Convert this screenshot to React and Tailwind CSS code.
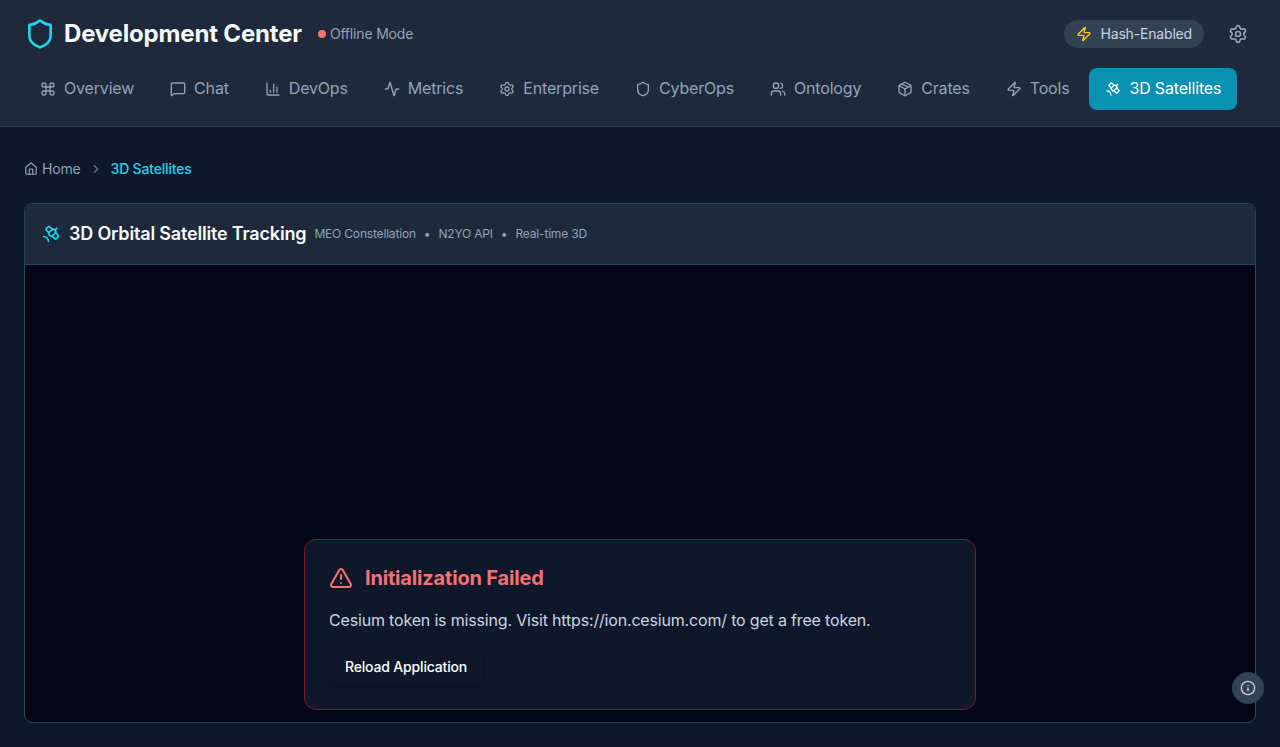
import React from "react";
import { Shield, Zap, Settings, Command, MessageSquare, BarChart3, Activity, Users, Package, Satellite, Home, ChevronRight, AlertTriangle, Info } from "lucide-react";

const tabs = [
  ["Overview", Command],
  ["Chat", MessageSquare],
  ["DevOps", BarChart3],
  ["Metrics", Activity],
  ["Enterprise", Settings],
  ["CyberOps", Shield],
  ["Ontology", Users],
  ["Crates", Package],
  ["Tools", Zap],
  ["3D Satellites", Satellite],
];

function Header() {
  return (
    <header className="h-[127px] border-b border-[#334155] bg-[#1e293b] px-6">
      <div className="flex h-[68px] items-center justify-between">
        <div className="flex items-center">
          <Shield className="mr-2 size-8 text-[#22d3ee]" />
          <h1 className="text-2xl font-bold text-[#f8fafc]">Development Center</h1>
          <span className="ml-4 size-2 rounded-full bg-[#f87171]" />
          <span className="ml-1 text-sm text-[#94a3b8]">Offline Mode</span>
        </div>
        <div className="flex items-center gap-4">
          <div className="flex h-7 items-center gap-2 rounded-full bg-[#334155] px-3 text-sm text-[#cbd5e1]">
            <Zap className="size-4 text-[#facc15]" />
            Hash-Enabled
          </div>
          <button className="p-2 text-[#94a3b8]"><Settings className="size-5" /></button>
        </div>
      </div>
      <nav className="flex gap-1">
        {tabs.map(([label, Icon], i) => (
          <button
            key={label}
            className={`flex h-[42px] shrink-0 items-center gap-2 rounded-lg px-4 text-base ${i === tabs.length - 1 ? "bg-[#0891b2] text-white" : "text-[#94a3b8]"}`}
          >
            <Icon className="size-4" />
            <span className="-mt-0.5">{label}</span>
          </button>
        ))}
      </nav>
    </header>
  );
}

export default function App() {
  return (
    <div className="relative h-[747px] overflow-hidden bg-[#0f172a] font-['Inter',sans-serif] tracking-[-0.176px] text-[#f8fafc] antialiased">
      <Header />
      <main className="px-6 pt-8">
        <nav className="flex h-5 items-center text-sm text-[#94a3b8]">
          <Home className="mr-1 size-3.5" />
          Home
          <ChevronRight className="mx-2 size-3.5 text-[#64748b]" />
          <span className="font-medium text-[#22d3ee]">3D Satellites</span>
        </nav>
        <section className="mt-6 flex h-[520px] flex-col overflow-hidden rounded-lg border border-[#1e495d] bg-[#020617]">
          <div className="flex h-[61px] shrink-0 items-center gap-2 border-b border-[#2a4356] bg-[#1e293b] px-4">
            <Satellite className="size-5 text-[#22d3ee]" />
            <h2 className="text-lg font-semibold">3D Orbital Satellite Tracking</h2>
            <div className="flex gap-2 text-xs text-[#94a3b8]">
              <span>MEO Constellation</span><span>•</span><span>N2YO API</span><span>•</span><span>Real-time 3D</span>
            </div>
          </div>
          <div className="flex flex-1 items-end justify-center pb-3">
            <div className="h-[171px] w-[672px] rounded-xl border border-[#7f1d1d] bg-[#0f172a] p-6">
              <div className="flex h-7 items-center gap-3 text-[#f87171]">
                <AlertTriangle className="size-6" />
                <h3 className="text-xl font-bold">Initialization Failed</h3>
              </div>
              <p className="mt-4 text-base text-[#cbd5e1]">Cesium token is missing. Visit https://ion.cesium.com/ to get a free token.</p>
              <button className="mt-[17px] h-9 rounded-md px-4 text-sm font-medium text-white shadow-sm">Reload Application</button>
            </div>
          </div>
        </section>
      </main>
      <button className="absolute top-[672px] right-4 flex size-8 items-center justify-center rounded-full bg-[#334155] text-[#cbd5e1]">
        <Info className="size-4" />
      </button>
    </div>
  );
}
